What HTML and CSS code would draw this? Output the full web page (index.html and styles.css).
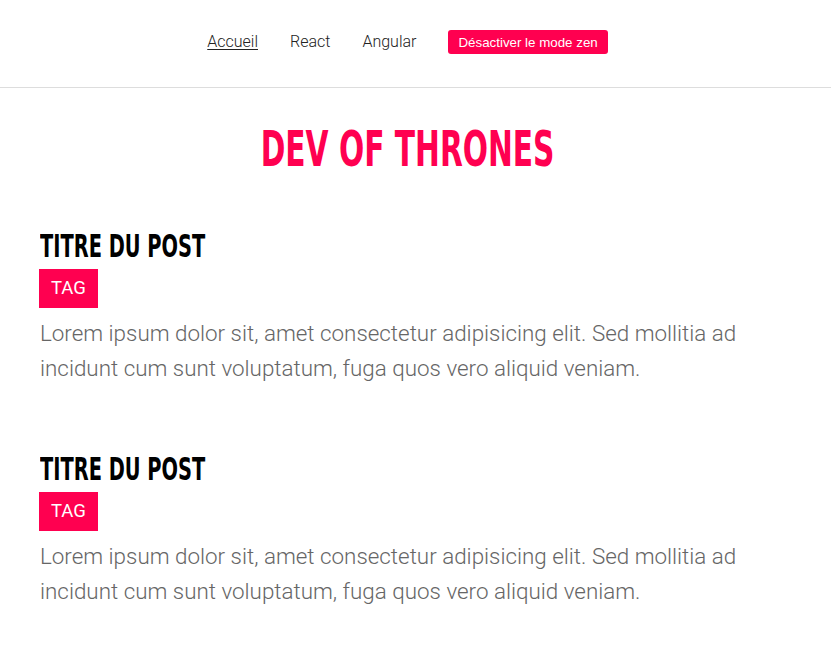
FILE: index.html
```html
<!DOCTYPE html>
<html lang="fr">
<head>
<meta charset="utf-8">
<title>Dev of Thrones</title>
<link rel="stylesheet" href="styles.css">
</head>
<body>
<header class="site-header">
  <nav class="nav">
    <a class="nav-link nav-link--active" href="#">Accueil</a>
    <a class="nav-link" href="#">React</a>
    <a class="nav-link" href="#">Angular</a>
    <button class="zen-btn" type="button">Désactiver le mode zen</button>
  </nav>
</header>
<main class="content">
  <h1 class="site-title"><span class="squeeze">DEV OF THRONES</span></h1>
  <article class="post">
    <h2 class="post-title"><span class="squeeze squeeze--left">TITRE DU POST</span></h2>
    <span class="tag">TAG</span>
    <p class="post-text">Lorem ipsum dolor sit, amet consectetur adipisicing elit. Sed mollitia ad incidunt cum sunt voluptatum, fuga quos vero aliquid veniam.</p>
  </article>
  <article class="post">
    <h2 class="post-title"><span class="squeeze squeeze--left">TITRE DU POST</span></h2>
    <span class="tag">TAG</span>
    <p class="post-text">Lorem ipsum dolor sit, amet consectetur adipisicing elit. Sed mollitia ad incidunt cum sunt voluptatum, fuga quos vero aliquid veniam.</p>
  </article>
</main>
</body>
</html>
```
FILE: styles.css
```css
html, body {
  margin: 0;
  padding: 0;
  background: #ffffff;
}

body {
  font-family: Roboto, "Liberation Sans", sans-serif;
  color: #222;
}

.site-header {
  border-bottom: 1px solid #dddddd;
}

.nav {
  display: flex;
  justify-content: center;
  align-items: center;
  gap: 32px;
  height: 87px;
  padding-right: 16px;
  padding-bottom: 3px;
  box-sizing: border-box;
}

.nav-link {
  font-family: Roboto, sans-serif;
  font-weight: 300;
  font-size: 16px;
  line-height: 24px;
  color: #222;
  text-decoration: none;
}

.nav-link--active {
  text-decoration: underline;
  text-underline-offset: 2px;
}

.zen-btn {
  font-family: "Liberation Sans", Arial, sans-serif;
  font-size: 13.33px;
  height: 24px;
  padding: 0 10px;
  border: none;
  border-radius: 3px;
  background: #ff0050;
  color: #ffffff;
}

.content {
  padding: 0 56px 40px 40px;
}

.site-title {
  margin: 31px 0 0;
  text-align: center;
  font-family: "DejaVu Sans Condensed", "Liberation Sans", sans-serif;
  font-weight: 700;
  font-size: 50px;
  line-height: 60px;
  color: #ff0050;
}

.squeeze {
  display: inline-block;
  transform: scaleX(0.66);
  transform-origin: center;
}

.squeeze--left {
  transform: scaleX(0.685);
  transform-origin: left;
}

.post {
  margin-top: 47px;
}

.post + .post {
  margin-top: 63px;
}

.post-title {
  margin: 0 0 3px;
  font-family: "DejaVu Sans Condensed", "Liberation Sans", sans-serif;
  font-weight: 700;
  font-size: 31.5px;
  line-height: 40px;
  color: #000;
}

.tag {
  display: inline-block;
  background: #ff0050;
  color: #ffffff;
  font-family: Roboto, sans-serif;
  font-weight: 400;
  font-size: 18.5px;
  line-height: 21px;
  padding: 9px 12px;
  margin-left: -1px;
}

.post-text {
  margin: 8px 0 0;
  font-family: Roboto, sans-serif;
  font-weight: 300;
  font-size: 22.4px;
  line-height: 35px;
  color: #666666;
}
```
